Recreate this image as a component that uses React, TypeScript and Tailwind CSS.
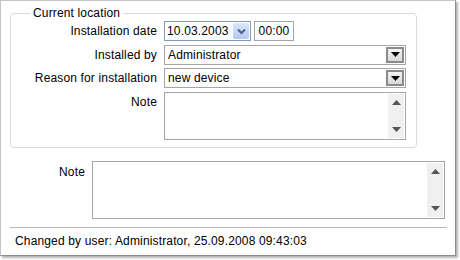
import React from 'react';

function DropButton() {
  return (
    <div className="flex h-full w-[18px] items-center justify-center border-2 border-[#8a8a8a] bg-gradient-to-b from-[#f4f4f4] to-[#d8d8d8]">
      <svg width="9" height="5" viewBox="0 0 9 5">
        <path d="M0 0h9L4.5 5z" fill="#000" />
      </svg>
    </div>
  );
}

function Combo({ value }: { value: string }) {
  return (
    <div className="flex h-[20px] items-center border border-[#a5a5a5] bg-white pr-px py-px">
      <span className="flex-1 pl-[3px] text-[12px] leading-none text-black">{value}</span>
      <DropButton />
    </div>
  );
}

function ScrollBar() {
  return (
    <div className="flex w-[16px] flex-col items-center justify-between bg-[#f0f0f0] py-[6px]">
      <svg width="9" height="5" viewBox="0 0 9 5">
        <path d="M0 5h9L4.5 0z" fill="#555" />
      </svg>
      <svg width="9" height="5" viewBox="0 0 9 5">
        <path d="M0 0h9L4.5 5z" fill="#555" />
      </svg>
    </div>
  );
}

function TextBox({ className }: { className: string }) {
  return (
    <div className={`flex justify-end border border-[#a5a5a5] bg-white p-px ${className}`}>
      <ScrollBar />
    </div>
  );
}

export default function App() {
  return (
    <div className="h-[260px] w-[460px] bg-white tracking-[0.15px]" style={{ fontFamily: '"Liberation Sans", Arial, sans-serif' }}>
      <div className="flex h-[256px] w-[456px] flex-col border border-[#c4c4c4] border-r-[#8c8c8c] border-b-[#8c8c8c] shadow-[2px_2px_2px_rgba(0,0,0,0.3)]">
        <fieldset className="ml-[9px] mt-[5px] w-[407px] rounded-[4px] border border-[#d3dbe3] pb-[7px] pr-[10px]">
          <legend className="ml-[19px] px-[3px] text-[12px] leading-[14px] text-black">Current location</legend>
          <div className="grid grid-cols-[146px_1fr] gap-x-[7px] gap-y-[3.5px] pt-px text-[12px] text-black">
            <div className="flex h-[20px] items-center justify-end">Installation date</div>
            <div className="flex h-[20px] items-center gap-[3px]">
              <div className="flex h-[20px] w-[87px] items-center border border-[#7f9db9] bg-white py-px pr-px">
                <span className="flex-1 pl-[2px] leading-none">10.03.2003</span>
                <div className="flex h-full w-[16px] items-center justify-center rounded-[2px] bg-gradient-to-b from-[#dbe5fb] to-[#b5c8f2]">
                  <svg width="9" height="7" viewBox="0 0 9 7">
                    <path d="M1 1.5l3.5 3.5 3.5-3.5" fill="none" stroke="#4d6185" strokeWidth="2" />
                  </svg>
                </div>
              </div>
              <div className="flex h-[20px] w-[40px] items-center justify-center border border-[#a5a5a5] bg-white leading-none">00:00</div>
            </div>
            <div className="flex h-[20px] items-center justify-end">Installed by</div>
            <Combo value="Administrator" />
            <div className="flex h-[20px] items-center justify-end">Reason for installation</div>
            <Combo value="new device" />
            <div className="flex items-start justify-end pt-[1px]">Note</div>
            <TextBox className="h-[48px]" />
          </div>
        </fieldset>
        <div className="mt-[13px] flex gap-[7px] text-[12px] text-black">
          <div className="w-[84px] pt-[2px] text-right">Note</div>
          <TextBox className="h-[58px] w-[353px]" />
        </div>
        <div className="ml-[9px] mt-[8px] h-px w-[437px] bg-[#b8b8b8]" />
        <div className="ml-[14px] mt-[6px] text-[12px] leading-[14px] text-black">
          Changed by user: Administrator, 25.09.2008 09:43:03
        </div>
      </div>
    </div>
  );
}
